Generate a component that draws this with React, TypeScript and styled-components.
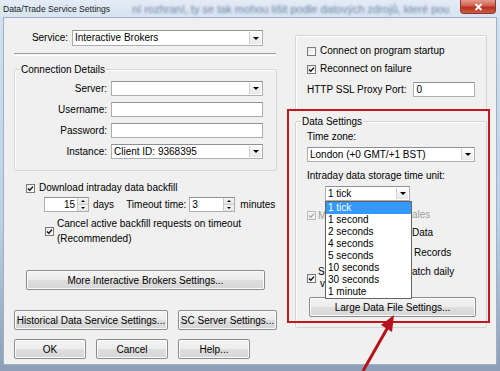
import React from 'react'
import styled, { createGlobalStyle } from 'styled-components'

const GlobalStyle = createGlobalStyle`
    html, body {
        margin: 0;
        padding: 0;
        overflow: hidden;
    }
`

const Screen = styled.div`
    position: relative;
    width: 500px;
    height: 371px;
    overflow: hidden;
    background: linear-gradient(180deg, #d3e1f0 0%, #bcd0e6 60%, #8c9fb6 100%);
    font-family: "Liberation Sans", Arial, sans-serif;
    font-size: 10px;
    color: #000;
`

const TitleBar = styled.div`
    height: 18px;
    display: flex;
    align-items: center;
    padding-left: 3px;
    background: linear-gradient(180deg, #e3ecf6 0%, #d6e3f1 100%);
`

const Title = styled.span`
    font-size: 8.6px;
    color: #1b1b1b;
    white-space: nowrap;
`

const GhostText = styled.span`
    margin-left: 22px;
    margin-right: auto;
    font-size: 11px;
    color: #6f83a0;
    filter: blur(1.2px);
    white-space: nowrap;
`

const CloseButton = styled.div`
    width: 34px;
    height: 13px;
    margin: 0 4px 5px 0;
    align-self: flex-start;
    border-radius: 0 0 4px 4px;
    border: 1px solid #8a3a36;
    border-top: none;
    background: linear-gradient(180deg, #e59a8c 0%, #d0604f 45%, #b9301f 55%, #cf5a3e 100%);
    display: flex;
    align-items: center;
    justify-content: center;
`

const Client = styled.div`
    margin: 0 4px;
    height: 346px;
    background: #f0f0f0;
    box-shadow: 0 0 0 1px #9fb0c6;
    display: flex;
`

const LeftColumn = styled.div`
    margin-left: 10px;
    width: 263px;
    display: flex;
    flex-direction: column;
`

const RightColumn = styled.div`
    margin-left: 18px;
    width: 192px;
    display: flex;
    flex-direction: column;
`

const Row = styled.div<{ $top?: number; $indent?: number; $height?: number }>`
    display: flex;
    align-items: center;
    margin-top: ${p => p.$top ?? 0}px;
    padding-left: ${p => p.$indent ?? 0}px;
    height: ${p => (p.$height ? `${p.$height}px` : 'auto')};
    white-space: nowrap;
`

const Label = styled.span<{ $width?: number; $gap?: number; $muted?: boolean }>`
    display: inline-block;
    width: ${p => (p.$width ? `${p.$width}px` : 'auto')};
    text-align: ${p => (p.$width ? 'right' : 'left')};
    margin-right: ${p => p.$gap ?? 0}px;
    line-height: 12px;
    color: ${p => (p.$muted ? '#a0a0a0' : '#000')};
`

// left-aligned fixed-width lead, used where the open list hides the middle of a line
const Lead = styled.span<{ $w: number; $muted?: boolean }>`
    display: inline-block;
    width: ${p => p.$w}px;
    color: ${p => (p.$muted ? '#a0a0a0' : '#000')};
`

const Separator = styled.div`
    margin-top: 7px;
    width: 262px;
    height: 1px;
    border-top: 1px solid #a0a0a0;
    border-bottom: 1px solid #ffffff;
`

const GroupBox = styled.div<{ $top: number; $pad: string; $open?: boolean }>`
    position: relative;
    margin-top: ${p => p.$top}px;
    border: 1px solid #d5d5d5;
    border-bottom-color: ${p => (p.$open ? 'transparent' : '#d5d5d5')};
    border-radius: 2px;
    box-shadow: inset 1px 1px 0 #ffffff;
    padding: ${p => p.$pad};
    display: flex;
    flex-direction: column;
`

const GroupTitle = styled.span`
    position: absolute;
    top: -7px;
    left: 5px;
    padding: 0 1px;
    background: #f0f0f0;
    line-height: 13px;
`

const Field = styled.div<{ $width: number; $height?: number }>`
    box-sizing: border-box;
    width: ${p => p.$width}px;
    height: ${p => p.$height ?? 15}px;
    background: #fff;
    border: 1px solid #abadb3;
    border-top-color: #8e9099;
    display: flex;
    align-items: center;
    padding-left: 2px;
    line-height: 12px;
    white-space: nowrap;
`

const FieldText = styled.span<{ $right?: boolean }>`
    flex: 1;
    text-align: ${p => (p.$right ? 'right' : 'left')};
    padding-right: ${p => (p.$right ? 1 : 0)}px;
`

const ComboArrow = styled.div`
    width: 11px;
    align-self: stretch;
    margin: 1px 1px 1px 0;
    background: linear-gradient(180deg, #fbfbfb 0%, #e8e8e8 100%);
    border-left: 1px solid #cfcfcf;
    display: flex;
    align-items: center;
    justify-content: center;

    &::after {
        content: '';
        border-left: 3px solid transparent;
        border-right: 3px solid transparent;
        border-top: 3px solid #000;
    }
`

const SpinButtons = styled.div`
    width: 10px;
    align-self: stretch;
    margin: 0 0 0 1px;
    display: flex;
    flex-direction: column;
    border-left: 1px solid #c8c8c8;
`

const SpinHalf = styled.div<{ $up?: boolean }>`
    flex: 1;
    background: linear-gradient(180deg, #f6f6f6, #e4e4e4);
    border-top: ${p => (p.$up ? 'none' : '1px solid #c8c8c8')};
    display: flex;
    align-items: center;
    justify-content: center;

    &::after {
        content: '';
        border-left: 2px solid transparent;
        border-right: 2px solid transparent;
        ${p => (p.$up ? 'border-bottom: 2px solid #000;' : 'border-top: 2px solid #000;')}
    }
`

const CheckBox = styled.span<{ $disabled?: boolean; $gap?: number }>`
    box-sizing: border-box;
    flex: none;
    width: 9px;
    height: 9px;
    margin-right: ${p => p.$gap ?? 4}px;
    border: 1px solid ${p => (p.$disabled ? '#b8b8b8' : '#7a7a7a')};
    background: ${p => (p.$disabled ? '#f4f4f4' : 'linear-gradient(135deg, #e6e6e6, #ffffff)')};
    display: inline-flex;
    align-items: center;
    justify-content: center;
`

const Button = styled.div<{ $width: number; $height?: number; $top?: number; $left?: number }>`
    box-sizing: border-box;
    width: ${p => p.$width}px;
    height: ${p => p.$height ?? 20}px;
    margin-top: ${p => p.$top ?? 0}px;
    margin-left: ${p => p.$left ?? 0}px;
    border: 1px solid #8c8c8c;
    border-radius: 2px;
    background: linear-gradient(180deg, #f4f4f4 0%, #ececec 48%, #dedede 52%, #d6d6d6 100%);
    box-shadow: inset 0 0 0 1px #fbfbfb;
    display: flex;
    align-items: center;
    justify-content: center;
    white-space: nowrap;
    flex: none;
`

const ButtonRow = styled.div<{ $top: number }>`
    display: flex;
    gap: 10px;
    margin-top: ${p => p.$top}px;
`

const TextBlock = styled.div<{ $lh: number }>`
    line-height: ${p => p.$lh}px;
    white-space: nowrap;
`

const ComboWrap = styled.div`
    position: relative;
    margin-left: 18px;
    margin-top: 4px;
    width: 85px;
`

const DropList = styled.div`
    position: absolute;
    top: 100%;
    left: 0;
    width: 87px;
    box-sizing: border-box;
    background: #fff;
    border: 1px solid #646464;
    z-index: 2;
`

const DropItem = styled.div<{ $selected?: boolean }>`
    height: 12px;
    line-height: 12px;
    padding-left: 2px;
    background: ${p => (p.$selected ? '#3399ff' : 'transparent')};
    color: ${p => (p.$selected ? '#fff' : '#000')};
`

const Highlight = styled.div`
    position: absolute;
    left: 287px;
    top: 109px;
    width: 203px;
    height: 214px;
    box-sizing: border-box;
    border: 2px solid #c4161c;
    pointer-events: none;
`

const Overlay = styled.svg`
    position: absolute;
    left: 0;
    top: 0;
    pointer-events: none;
`

const Tick = ({ muted }: { muted?: boolean }) => (
    <svg width="7" height="7" viewBox="0 0 7 7">
        <path d="M1 3.4 L2.8 5.2 L6 1.6" fill="none" stroke={muted ? '#a8a8a8' : '#111'} strokeWidth="1.4" />
    </svg>
)

const Combo = ({ width, height, value }: { width: number; height?: number; value?: string }) => (
    <Field $width={width} $height={height}>
        <FieldText>{value}</FieldText>
        <ComboArrow />
    </Field>
)

const Spin = ({ width, value, right }: { width: number; value: string; right?: boolean }) => (
    <Field $width={width}>
        <FieldText $right={right}>{value}</FieldText>
        <SpinButtons>
            <SpinHalf $up />
            <SpinHalf />
        </SpinButtons>
    </Field>
)

const timeUnits = ['1 tick', '1 second', '2 seconds', '4 seconds', '5 seconds', '10 seconds', '30 seconds', '1 minute']

const App = () => {
    return (
        <Screen>
            <GlobalStyle />
            <TitleBar>
                <Title>Data/Trade Service Settings</Title>
                <GhostText>ní rozhraní, ty se tak mohou lišit podle datových zdrojů, které pou</GhostText>
                <CloseButton>
                    <svg width="9" height="8" viewBox="0 0 9 8">
                        <path d="M1.5 1 L7.5 7 M7.5 1 L1.5 7" stroke="#fff" strokeWidth="1.8" />
                    </svg>
                </CloseButton>
            </TitleBar>

            <Client>
                <LeftColumn>
                    <Row $top={12} $height={16}>
                        <Label $width={54} $gap={4}>Service:</Label>
                        <Combo width={191} height={16} value="Interactive Brokers" />
                    </Row>
                    <Separator />

                    <GroupBox $top={13} $pad="11px 12px 11px 0">
                        <GroupTitle>Connection Details</GroupTitle>
                        <Row $height={15}>
                            <Label $width={92} $gap={4}>Server:</Label>
                            <Combo width={152} />
                        </Row>
                        <Row $top={6} $height={15}>
                            <Label $width={92} $gap={4}>Username:</Label>
                            <Field $width={152} />
                        </Row>
                        <Row $top={6} $height={15}>
                            <Label $width={92} $gap={4}>Password:</Label>
                            <Field $width={152} />
                        </Row>
                        <Row $top={6} $height={15}>
                            <Label $width={92} $gap={4}>Instance:</Label>
                            <Combo width={152} value="Client ID: 9368395" />
                        </Row>
                    </GroupBox>

                    <Row $top={11} $indent={12} $height={12}>
                        <CheckBox><Tick /></CheckBox>
                        <Label>Download intraday data backfill</Label>
                    </Row>
                    <Row $top={3} $indent={30} $height={15}>
                        <Spin width={45} value="15" right />
                        <Label style={{ marginLeft: 4 }} $gap={12}>days</Label>
                        <Label $gap={3}>Timeout time:</Label>
                        <Spin width={46} value="3" />
                        <Label style={{ marginLeft: 5 }}>minutes</Label>
                    </Row>
                    <Row $top={4} $indent={31}>
                        <CheckBox $gap={3}><Tick /></CheckBox>
                        <TextBlock $lh={15}>
                            Cancel active backfill requests on timeout
                            <br />
                            (Recommended)
                        </TextBlock>
                    </Row>

                    <Button $width={239} $top={24} $left={12}>More Interactive Brokers Settings...</Button>

                    <ButtonRow $top={20}>
                        <Button $width={154}>Historical Data Service Settings...</Button>
                        <Button $width={99}>SC Server Settings...</Button>
                    </ButtonRow>
                    <ButtonRow $top={9}>
                        <Button $width={72}>OK</Button>
                        <Button $width={72}>Cancel</Button>
                        <Button $width={72}>Help...</Button>
                    </ButtonRow>
                </LeftColumn>

                <RightColumn>
                    <GroupBox $top={17} $pad="9px 11px 15px 11px" $open>
                        <Row $height={12}>
                            <CheckBox />
                            <Label>Connect on program startup</Label>
                        </Row>
                        <Row $top={6} $height={12}>
                            <CheckBox><Tick /></CheckBox>
                            <Label>Reconnect on failure</Label>
                        </Row>
                        <Row $top={7} $height={15}>
                            <Label $gap={7}>HTTP SSL Proxy Port:</Label>
                            <Field $width={62}>0</Field>
                        </Row>
                    </GroupBox>

                    <GroupBox $top={8} $pad="9px 11px 10px 11px">
                        <GroupTitle>Data Settings</GroupTitle>
                        <Row $height={12}>
                            <Label>Time zone:</Label>
                        </Row>
                        <Row $top={4} $height={15}>
                            <Combo width={170} value="London (+0 GMT/+1 BST)" />
                        </Row>
                        <Row $top={8} $height={12}>
                            <Label>Intraday data storage time unit:</Label>
                        </Row>
                        <ComboWrap>
                            <Combo width={85} value="1 tick" />
                            <DropList>
                                {timeUnits.map((u, i) => (
                                    <DropItem key={u} $selected={i === 0}>{u}</DropItem>
                                ))}
                            </DropList>
                        </ComboWrap>
                        <Row $top={8} $height={12}>
                            <CheckBox $disabled $gap={2}><Tick muted /></CheckBox>
                            <Lead $w={94} $muted>M</Lead>
                            <Label $muted>ales</Label>
                        </Row>
                        <Row $top={6} $height={12}>
                            <Lead $w={105} />
                            <Label>Data</Label>
                        </Row>
                        <Row $top={8} $height={12}>
                            <Lead $w={107} />
                            <Label>Records</Label>
                        </Row>
                        <Row $top={7}>
                            <CheckBox $gap={2}><Tick /></CheckBox>
                            <TextBlock $lh={12}>
                                <Lead $w={94}>S</Lead>atch daily
                                <br />
                                <Lead $w={94} style={{ paddingLeft: 2 }}>v</Lead>
                            </TextBlock>
                        </Row>
                        <Button $width={167} $height={20} $top={7} $left={2}>Large Data File Settings...</Button>
                    </GroupBox>
                </RightColumn>
            </Client>

            <Highlight />
            <Overlay width="500" height="371" viewBox="0 0 500 371">
                <line x1="363" y1="371" x2="388" y2="327" stroke="#b5121b" strokeWidth="3" />
                <polygon points="394,315 392,332 381,325" fill="#b5121b" />
            </Overlay>
        </Screen>
    )
}

export default App
